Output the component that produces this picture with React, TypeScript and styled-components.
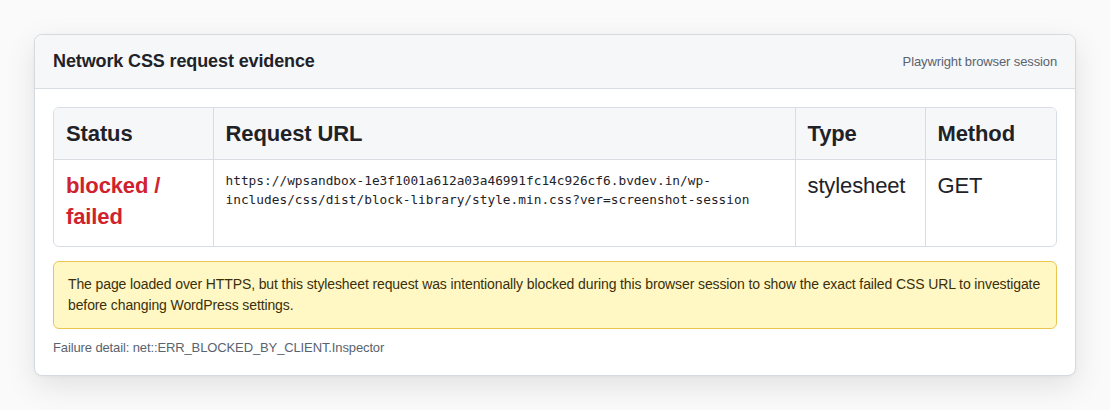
import React from "react";
import styled, { createGlobalStyle } from "styled-components";

const GlobalStyle = createGlobalStyle`
  html, body { margin: 0; padding: 0; background: #fafafa; }
  body {
    font-family: "Liberation Sans", Arial, sans-serif;
    color: #1f2328;
    letter-spacing: -0.12px;
  }
  * { box-sizing: border-box; }
`;

const Page = styled.div`
  padding: 34px 34px 34px 34px;
`;

const Card = styled.section`
  width: 1042px;
  background: #ffffff;
  border: 1px solid #d5dae0;
  border-radius: 8px;
  box-shadow: 0 10px 30px rgba(0, 0, 0, 0.1), 0 1px 3px rgba(0, 0, 0, 0.04);
  overflow: hidden;
`;

const Header = styled.header`
  display: flex;
  align-items: center;
  justify-content: space-between;
  height: 54px;
  padding: 0 18px;
  background: #f6f7f9;
  border-bottom: 1px solid #d8dde3;
`;

const Title = styled.h2`
  margin: 0;
  font-size: 18px;
  font-weight: 700;
  color: #1f2328;
`;

const Meta = styled.span`
  font-size: 13px;
  color: #59636e;
`;

const Body = styled.div`
  padding: 18px 18px 18px 18px;
  display: flex;
  flex-direction: column;
`;

const TableWrap = styled.div`
  border: 1px solid #d8dde3;
  border-radius: 6px;
  overflow: hidden;
`;

const Table = styled.table`
  width: 100%;
  border-collapse: collapse;
  table-layout: fixed;
`;

const Th = styled.th<{ $w?: number; $last?: boolean }>`
  ${(p) => (p.$w ? `width: ${p.$w}px;` : "")}
  text-align: left;
  font-size: 22px;
  font-weight: 700;
  line-height: 27px;
  padding: 12px 12px 12px 12px;
  background: #f6f7f9;
  color: #1f2328;
  border-bottom: 1px solid #d8dde3;
  border-right: ${(p) => (p.$last ? "none" : "1px solid #d8dde3")};
`;

const Td = styled.td<{ $last?: boolean; $tone?: "danger" | "mono" | "plain" }>`
  vertical-align: top;
  padding: ${(p) => (p.$tone === "mono" ? "11px 12px 12px 12px" : "10px 12px 12px 12px")};
  height: 86px;
  border-right: ${(p) => (p.$last ? "none" : "1px solid #d8dde3")};
  font-size: ${(p) => (p.$tone === "mono" ? "12.8px" : "22px")};
  line-height: ${(p) => (p.$tone === "mono" ? "19px" : "31px")};
  font-weight: ${(p) => (p.$tone === "danger" ? 700 : 400)};
  color: ${(p) => (p.$tone === "danger" ? "#cf222e" : "#1f2328")};
  letter-spacing: ${(p) => (p.$tone === "mono" ? "0" : "-0.12px")};
  font-family: ${(p) =>
    p.$tone === "mono"
      ? `"DejaVu Sans Mono", "Liberation Mono", monospace`
      : `"Liberation Sans", Arial, sans-serif`};
`;

const UrlText = styled.span`
  display: block;
`;

const Notice = styled.div`
  margin-top: 14px;
  padding: 12px 14px;
  background: #fff8c5;
  border: 1px solid #eac54f;
  border-radius: 6px;
  font-size: 14px;
  line-height: 21px;
  color: #3b2f0a;
  letter-spacing: -0.11px;
`;

const Detail = styled.p`
  margin: 10px 0 0 0;
  font-size: 13px;
  line-height: 18px;
  color: #59636e;
`;

export default function App() {
  return (
    <Page>
      <GlobalStyle />
      <Card>
        <Header>
          <Title>Network CSS request evidence</Title>
          <Meta>Playwright browser session</Meta>
        </Header>
        <Body>
          <TableWrap>
            <Table>
              <thead>
                <tr>
                  <Th $w={159}>Status</Th>
                  <Th>Request URL</Th>
                  <Th $w={130}>Type</Th>
                  <Th $w={131} $last>
                    Method
                  </Th>
                </tr>
              </thead>
              <tbody>
                <tr>
                  <Td $tone="danger">blocked / failed</Td>
                  <Td $tone="mono">
                    <UrlText>
                      https://wpsandbox-1e3f1001a612a03a46991fc14c926cf6.bvdev.in/wp-
                      <br />
                      includes/css/dist/block-library/style.min.css?ver=screenshot-session
                    </UrlText>
                  </Td>
                  <Td $tone="plain">stylesheet</Td>
                  <Td $tone="plain" $last>
                    GET
                  </Td>
                </tr>
              </tbody>
            </Table>
          </TableWrap>
          <Notice>
            The page loaded over HTTPS, but this stylesheet request was intentionally blocked during this
            browser session to show the exact failed CSS URL to investigate before changing WordPress
            settings.
          </Notice>
          <Detail>Failure detail: net::ERR_BLOCKED_BY_CLIENT.Inspector</Detail>
        </Body>
      </Card>
    </Page>
  );
}
